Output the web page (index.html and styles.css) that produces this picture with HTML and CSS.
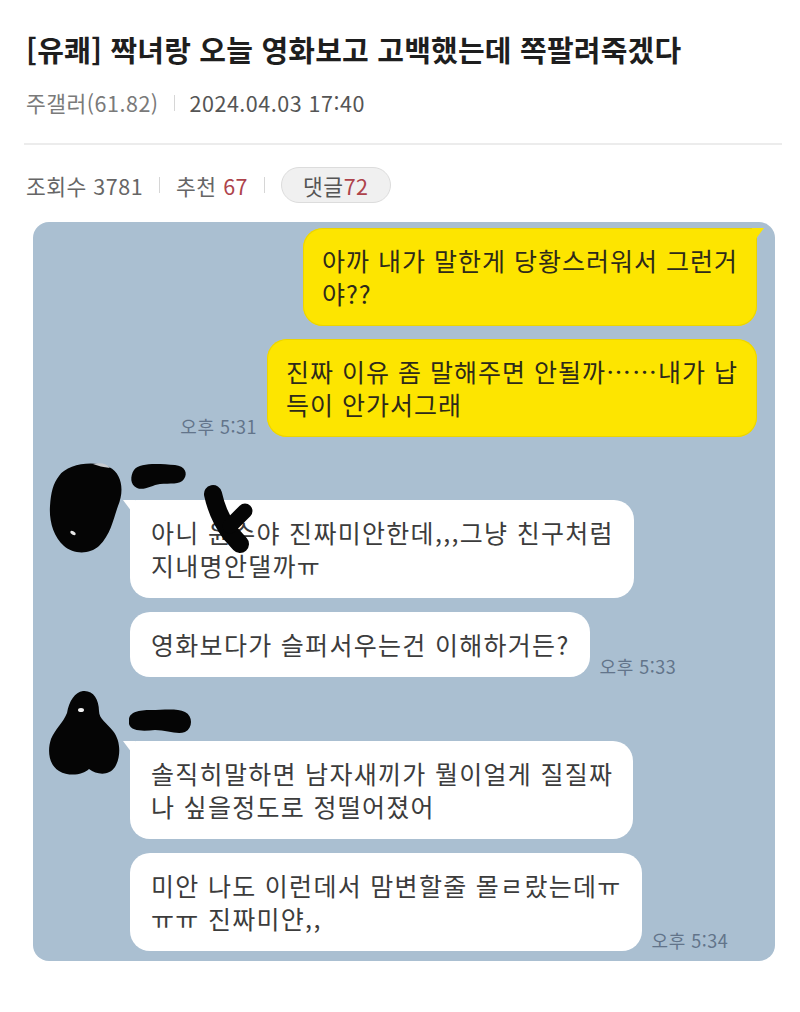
FILE: index.html
```html
<!DOCTYPE html>
<html lang="ko">
<head>
<meta charset="utf-8">
<title>[유쾌] 짝녀랑 오늘 영화보고 고백했는데 쪽팔려죽겠다</title>
<link rel="stylesheet" href="styles.css">
</head>
<body>
<div class="page">
  <header class="post-head">
    <h1 class="title">[유쾌] 짝녀랑 오늘 영화보고 고백했는데 쪽팔려죽겠다</h1>
    <div class="meta">
      <span class="author">주갤러(61.82)</span>
      <span class="sep"></span>
      <span class="date">2024.04.03 17:40</span>
    </div>
  </header>
  <div class="stats">
    <span class="stat">조회수 3781</span>
    <span class="sep"></span>
    <span class="stat">추천 <em class="num">67</em></span>
    <span class="sep"></span>
    <span class="pill">댓글<em class="num">72</em></span>
  </div>

  <div class="chat">
    <div class="row sent">
      <div class="bubble yellow tail-right">아까 내가 말한게 당황스러워서 그런거<br>야??</div>
    </div>
    <div class="row sent">
      <span class="time">오후 5:31</span>
      <div class="bubble yellow">진짜 이유 좀 말해주면 안될까……내가 납<br>득이 안가서그래</div>
    </div>

    <div class="group first">
      <div class="avatar">
        <svg width="83" height="100" viewBox="0 0 83 100">
          <path d="M12,14 C20,2 46,-2 62,5 C76,12 77,30 71,44 C66,58 64,72 52,84 C42,93 26,92 17,84 C6,74 2,58 3,44 C4,30 6,22 12,14 Z" fill="#050505"/>
          <path d="M46,2 C54,0 60,2 63,6 C56,5 51,4 46,2 Z" fill="#c9ccd0"/>
          <ellipse cx="26" cy="71" rx="3" ry="1.6" fill="#e8e8e8" transform="rotate(30 26 71)"/>
        </svg>
      </div>
      <div class="msgs">
        <div class="name">
          <svg class="name-mark" width="60" height="34" viewBox="0 0 60 34">
            <path d="M4,9 C10,1 30,3 45,4 C55,5 58,12 54,18 C50,24 40,22 30,23 C22,24 14,30 7,27 C0,24 0,15 4,9 Z" fill="#050505"/>
          </svg>
        </div>
        <div class="row recv">
          <div class="bubble white tail-left">아니 윤수야 진짜미안한데,,,그냥 친구처럼<br>지내명안댈까ㅠ
            <svg class="text-mark" width="60" height="72" viewBox="0 0 60 72">
              <path d="M13,10 C16,24 22,38 31,50 L40,60" fill="none" stroke="#050505" stroke-width="18" stroke-linecap="round"/>
              <path d="M30,42 L45,27" fill="none" stroke="#050505" stroke-width="15" stroke-linecap="round"/>
            </svg>
          </div>
        </div>
        <div class="row recv">
          <div class="bubble white">영화보다가 슬퍼서우는건 이해하거든?</div>
          <span class="time">오후 5:33</span>
        </div>
      </div>
    </div>

    <div class="group second">
      <div class="avatar">
        <svg width="83" height="100" viewBox="0 0 83 100">
          <path d="M36,-12 C46,-13 52,-4 52,8 C52,16 60,20 66,28 C74,38 74,54 68,64 C62,73 50,72 42,66 C36,72 22,74 12,68 C2,62 0,48 4,36 C8,26 16,20 20,10 C22,-2 28,-11 36,-12 Z" fill="#050505"/>
          <ellipse cx="34" cy="7" rx="3" ry="2" fill="#f0f0f0"/>
        </svg>
      </div>
      <div class="msgs">
        <div class="name">
          <svg class="name-mark" width="70" height="34" viewBox="0 0 70 34">
            <path d="M2,17 C2,9 12,7 24,7 C36,7 50,5 58,9 C66,13 66,25 58,29 C50,32 40,27 28,27 C18,28 4,29 2,21 Z" fill="#050505"/>
          </svg>
        </div>
        <div class="row recv">
          <div class="bubble white tail-left">솔직히말하면 남자새끼가 뭘이얼게 질질짜<br>나 싶을정도로 정떨어졌어</div>
        </div>
        <div class="row recv">
          <div class="bubble white">미안 나도 이런데서 맘변할줄 몰ㄹ랐는데ㅠ<br>ㅠㅠ 진짜미얀,,</div>
          <span class="time">오후 5:34</span>
        </div>
      </div>
    </div>
  </div>
</div>
</body>
</html>
```

FILE: styles.css
```css
* { box-sizing: border-box; }

html, body {
  margin: 0;
  padding: 0;
  background: #ffffff;
}

body {
  font-family: "Noto Sans CJK KR", "Noto Sans", sans-serif;
  color: #222;
}

.page {
  width: 800px;
  padding: 30px 18px 0 24px;
}

.title {
  margin: 0;
  padding-left: 2px;
  font-size: 29px;
  line-height: 38px;
  font-weight: 700;
  letter-spacing: 0.2px;
  color: #1e1e1e;
}

.meta {
  margin-top: 21px;
  padding-left: 2px;
  padding-bottom: 26px;
  display: flex;
  align-items: center;
  font-size: 21.5px;
  line-height: 28px;
  letter-spacing: 0.5px;
  border-bottom: 2px solid #ececec;
}

.author { color: #7a7a7a; }
.date { color: #555; }

.sep {
  display: inline-block;
  width: 1px;
  height: 16px;
  background: #d6d6d6;
  margin: 0 15px;
}

.stats {
  margin-top: 22px;
  padding-left: 2px;
  display: flex;
  align-items: center;
  height: 36px;
  font-size: 21.5px;
  letter-spacing: 0.5px;
  color: #666;
}

.stats .sep { margin: 0 16px; }

.num {
  font-style: normal;
  color: #ae434b;
}

.pill {
  display: inline-flex;
  align-items: center;
  height: 36px;
  padding: 0 21px;
  border: 1px solid #dcdcdc;
  border-radius: 18px;
  background: #f0f0f0;
  color: #555;
}

.chat {
  margin: 19px 7px 0 9px;
  padding: 6px 18px 10px 14px;
  background: #aabfd1;
  border-radius: 16px;
  display: flex;
  flex-direction: column;
  gap: 13px;
}

.row {
  display: flex;
  align-items: flex-end;
  gap: 10px;
}

.row.sent { justify-content: flex-end; }

.bubble {
  position: relative;
  font-size: 25px;
  line-height: 33px;
  letter-spacing: 1px;
  padding: 16px 19px;
  border-radius: 20px;
  white-space: nowrap;
}

.bubble.yellow {
  background: #fde500;
  color: #2e2a1a;
  box-shadow: 0 0 0 1px #ecd400 inset;
}

.bubble.white {
  background: #ffffff;
  color: #3c3c3c;
  letter-spacing: 1.3px;
  padding: 16px 20px 16px 21px;
}

.tail-right { border-top-right-radius: 6px; }
.tail-right::after {
  content: "";
  position: absolute;
  top: 0;
  right: -7px;
  width: 12px;
  height: 16px;
  background: #fde500;
  clip-path: polygon(0 0, 100% 0, 0 100%);
}

.tail-left { border-top-left-radius: 6px; }
.tail-left::after {
  content: "";
  position: absolute;
  top: 0;
  left: -7px;
  width: 12px;
  height: 16px;
  background: #ffffff;
  clip-path: polygon(0 0, 100% 0, 100% 100%);
}

.time {
  font-size: 18px;
  line-height: 20px;
  letter-spacing: 0.5px;
  color: #62748a;
  padding-bottom: 1px;
  white-space: nowrap;
}

.group {
  display: flex;
}

.group.first { margin-top: 12px; }
.group.second { margin-top: 13px; }

.avatar {
  width: 83px;
  flex: none;
}

.avatar svg { display: block; overflow: visible; }

.msgs {
  display: flex;
  flex-direction: column;
  gap: 14px;
}

.name {
  position: relative;
  height: 24px;
}

.name-mark {
  position: absolute;
  left: 0;
  top: -1px;
  overflow: visible;
}

.group.second .name-mark { left: -3px; top: 0; }

.text-mark {
  position: absolute;
  left: 70px;
  top: -16px;
}
```
